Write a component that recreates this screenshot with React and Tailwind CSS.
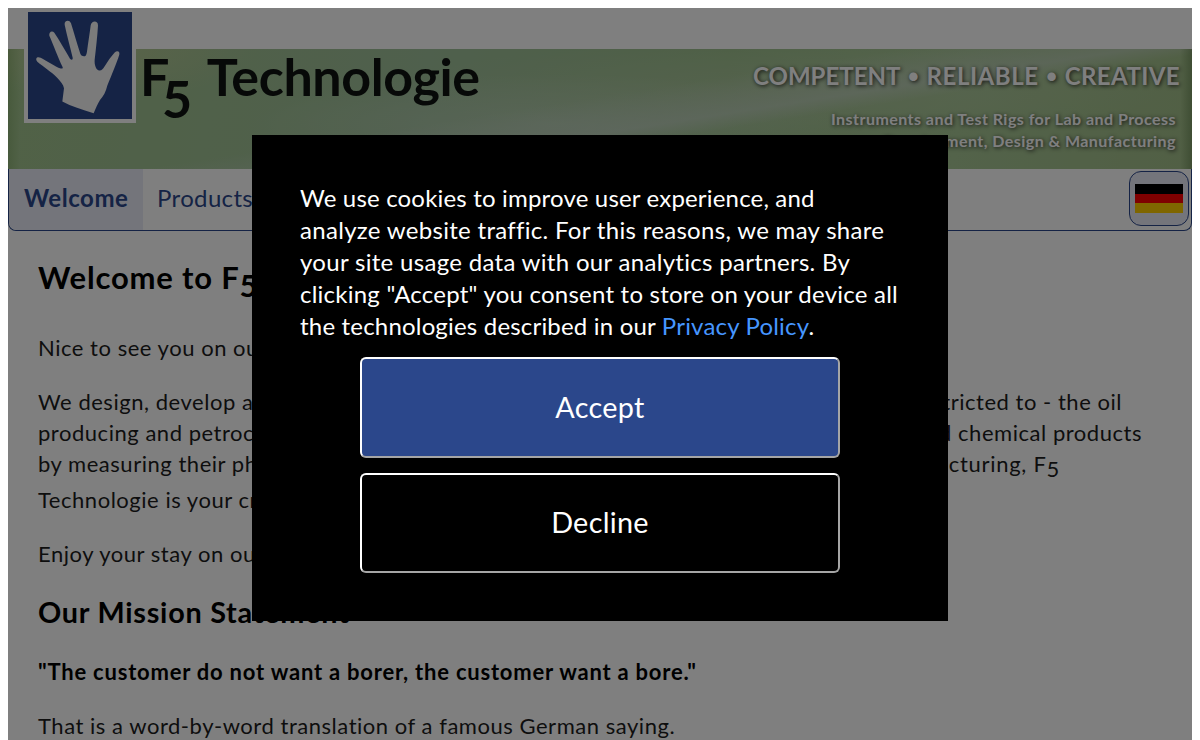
function HandLogo() {
  return (
    <div className="h-[115px] w-28 shrink-0 -mt-[41px] border-4 border-white bg-[#2b478b]">
      <svg viewBox="24 12 312 320" preserveAspectRatio="none" className="h-[107px] w-[104px]">
        <path
          fill="#f6f6f6"
          d="M127 280 L132 240 C130 228 122 220 110 207 C95 192 70 176 52 161 C44 150 52 144 62 149 C80 158 105 176 122 181 C128 182 130 180 127 175 C115 150 100 110 88 83 C86 72 96 66 103 74 C115 92 135 125 150 152 C155 157 159 155 158 149 C150 115 140 80 134 50 C132 38 148 33 153 46 C162 75 172 110 181 137 C184 144 190 145 195 144 C199 143 200 135 201 130 C205 100 209 75 212 52 C214 38 234 36 234 52 C232 85 228 120 224 155 C223 172 228 184 237 187 C245 188 249 182 254 174 C263 160 273 145 284 133 C292 126 300 130 298 139 C290 165 275 200 262 232 C258 250 250 265 240 275 C233 287 227 300 221 315 C185 304 155 295 127 280Z"
        />
      </svg>
    </div>
  );
}

function Header() {
  return (
    <header className="mt-[41px] flex h-[120px] shrink-0 justify-between bg-[linear-gradient(90deg,rgba(110,150,80,0.35),transparent_1%,transparent_99%,rgba(90,120,70,0.5)),linear-gradient(171deg,transparent_46%,rgba(200,212,204,0.5)_58%,transparent_63%),radial-gradient(ellipse_300px_50px_at_540px_75px,rgba(205,218,208,0.4),transparent),radial-gradient(ellipse_380px_50px_at_780px_40px,rgba(190,205,175,0.4),transparent),radial-gradient(ellipse_160px_50px_at_90px_0px,rgba(200,205,150,0.5),transparent),linear-gradient(100deg,#a2c48e,#9fc09a_35%,#9cc08c_60%,#a6c694_80%,#a3bf8a)] pr-3 pl-4">
      <div className="flex items-start">
        <HandLogo />
        <div className="flex pl-1 text-[52px] leading-[54px] font-bold tracking-[-0.4px] text-[#0e1210]">
          <span>F</span>
          <span className="relative top-[22px] -ml-[7px]">5</span>
          <span className="ml-[15px]">Technologie</span>
        </div>
      </div>
      <div className="flex flex-col items-end pt-[11px] font-bold text-white text-shadow-[1px_1px_4px_#222]">
        <div className="flex items-center gap-2 text-2xl leading-8">
          <span>COMPETENT</span>
          <span className="text-[17px]">●</span>
          <span className="tracking-[0.55px]">RELIABLE</span>
          <span className="text-[17px]">●</span>
          <span className="tracking-[0.4px]">CREATIVE</span>
        </div>
        <div className="mt-4 pr-1 text-right text-base leading-[22px] tracking-[0.46px]">
          <p>Instruments and Test Rigs for Lab and Process</p>
          <p>Development, Design &amp; Manufacturing</p>
        </div>
      </div>
    </header>
  );
}

function Nav() {
  return (
    <nav className="flex h-[62px] shrink-0 justify-between rounded-b-lg border border-t-0 border-[#2b478b] text-2xl leading-[58px] text-[#2b478b]">
      <div className="flex">
        <a className="w-[134px] rounded-bl-lg bg-[#e9ebf7] pl-[15px] font-bold tracking-[0.55px]">Welcome</a>
        <a className="pl-[14px] tracking-[0.35px]">Products</a>
      </div>
      <button
        type="button"
        title="Deutsch"
        className="mt-0.5 mr-0.5 flex h-[55px] w-[60px] items-center justify-center rounded-xl border border-[#2b478b] bg-[#e9ebf7]"
      >
        <span className="flex h-[29px] w-12 flex-col">
          <span className="flex-1 bg-black" />
          <span className="flex-1 bg-[#ff0000]" />
          <span className="flex-1 bg-[#ffcc00]" />
        </span>
      </button>
    </nav>
  );
}

function Content() {
  return (
    <main className="px-[30px] pt-[26px] text-[22px] leading-[31px] tracking-[0.53px] text-[#1c1c1c]">
      <h1 className="flex text-[31px] leading-10 font-bold tracking-[0.82px] text-black">
        <span>Welcome to F</span>
        <span className="relative top-2">5</span>
      </h1>
      <p className="mt-[35px]">Nice to see you on our</p>
      <div className="mt-[23px]">
        <p className="flex w-[1084px] justify-between">
          <span>We design, develop and manufacture</span>
          <span>for - but not restricted to - the oil</span>
        </p>
        <p className="flex w-[1104px] justify-between">
          <span>producing and petrochemical</span>
          <span>and chemical products</span>
        </p>
        <p className="mb-[5px] flex w-[1022px] justify-between">
          <span>by measuring their physical</span>
          <span className="tracking-[0.7px]">
            manufacturing, F<span className="relative top-[5px]">5</span>
          </span>
        </p>
        <p>Technologie is your creative</p>
      </div>
      <p className="mt-[23px]">Enjoy your stay on our</p>
      <h2 className="mt-[23px] text-[28.8px] leading-10 font-bold tracking-[0.75px] text-black">
        Our Mission Statement
      </h2>
      <p className="mt-6 font-bold tracking-[0.78px] text-black">
        "The customer do not want a borer, the customer want a bore."
      </p>
      <p className="mt-[23px]">That is a word-by-word translation of a famous German saying.</p>
    </main>
  );
}

function CookieButton({ label, className }) {
  return (
    <button
      type="button"
      className={`w-[480px] rounded-md border-2 border-t-white border-l-white border-r-[#a5a5a5] border-b-[#a5a5a5] text-[28.8px] tracking-[0.3px] ${className}`}
    >
      {label}
    </button>
  );
}

function CookieDialog() {
  return (
    <div className="absolute top-[127px] left-[244px] flex h-[486px] w-[696px] flex-col items-center bg-black pt-[47px] text-white">
      <div className="w-[600px] text-2xl leading-8 whitespace-nowrap">
        <p className="tracking-[0.18px]">We use cookies to improve user experience, and</p>
        <p className="tracking-[0.31px]">analyze website traffic. For this reasons, we may share</p>
        <p className="tracking-[0.31px]">your site usage data with our analytics partners. By</p>
        <p className="tracking-[0.23px]">clicking "Accept" you consent to store on your device all</p>
        <p className="tracking-[0.19px]">
          the technologies described in our <a className="text-[#4696ff]">Privacy Policy</a>.
        </p>
      </div>
      <CookieButton label="Accept" className="mt-[15px] h-[101px] bg-[#2b478b]" />
      <CookieButton label="Decline" className="mt-[15px] h-[100px] bg-black" />
    </div>
  );
}

export default function App() {
  return (
    <div className="h-[740px] w-[1200px] overflow-hidden bg-white px-2 pt-2 font-[Lato,sans-serif]">
      <div className="relative flex h-[732px] flex-col">
        <Header />
        <Nav />
        <Content />
        <div className="absolute inset-0 bg-black/50" />
        <CookieDialog />
      </div>
    </div>
  );
}
